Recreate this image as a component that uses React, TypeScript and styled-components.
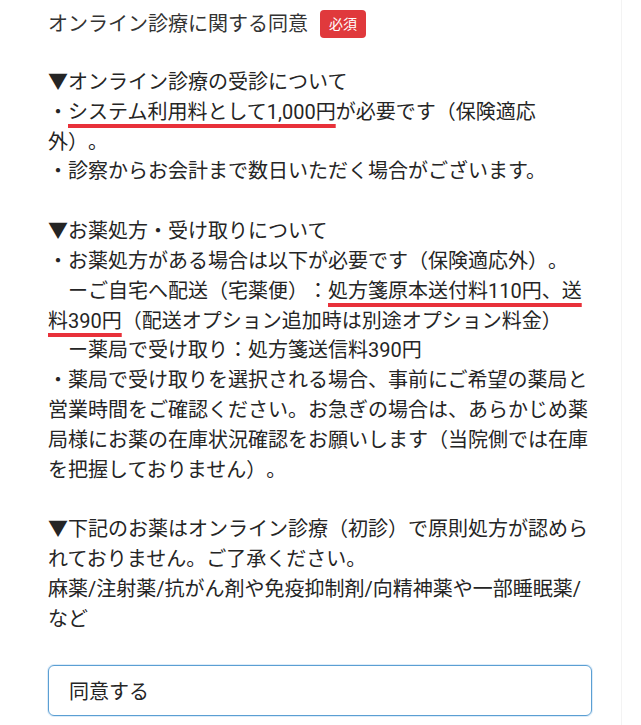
import React from 'react';
import styled, {createGlobalStyle} from "styled-components";

const GlobalStyle = createGlobalStyle`
  html, body {
    margin: 0;
    padding: 0;
    background: #ffffff;
  }
  body {
    font-family: Roboto, "Noto Sans CJK JP", sans-serif;
    text-spacing-trim: space-all;
    -webkit-font-smoothing: antialiased;
  }
`

const Page = styled.div`
  width: 622px;
  min-height: 725px;
  box-sizing: border-box;
  padding: 10px 0 0 48px;
  border-right: 1px solid #f3f3f3;
`

const Column = styled.div`
  width: 544px;
`

const Header = styled.div`
  display: flex;
  align-items: center;
  gap: 12px;
  height: 28px;
`

const Title = styled.h2`
  margin: 0;
  font-size: 20px;
  font-weight: 400;
  color: #333333;
  line-height: 28px;
`

const Badge = styled.span`
  display: inline-flex;
  align-items: center;
  justify-content: center;
  height: 28px;
  padding: 0 9px;
  border-radius: 4px;
  background: #e0393c;
  color: #ffffff;
  font-size: 14px;
  line-height: 1;
`

const Body = styled.div`
  margin-top: 30px;
  display: flex;
  flex-direction: column;
  gap: 30px;
  font-size: 20px;
  line-height: 29.8px;
  color: #252525;
`

const Section = styled.div`
  display: flex;
  flex-direction: column;
`

const Line = styled.div`
  line-break: strict;
`

// red hand-drawn style marker under the fees
const Marked = styled.span`
  text-decoration: underline;
  text-decoration-color: #e8313a;
  text-decoration-thickness: 4px;
  text-underline-offset: 5px;
  text-decoration-skip-ink: none;
`

const AgreeBox = styled.label`
  display: flex;
  align-items: center;
  height: 51px;
  box-sizing: border-box;
  margin-top: 30px;
  padding: 0 20px;
  border: 1.5px solid #5b9fd3;
  border-radius: 6px;
  box-shadow: 0 0 0 1px rgba(120, 180, 230, 0.25);
  font-size: 20px;
  color: #252525;
`

export default function App() {
    return (
        <>
            <GlobalStyle/>
            <Page>
                <Column>
                    <Header>
                        <Title>オンライン診療に関する同意</Title>
                        <Badge>必須</Badge>
                    </Header>
                    <Body>
                        <Section>
                            <Line>▼オンライン診療の受診について</Line>
                            <Line>・<Marked>システム利用料として1,000円</Marked>が必要です（保険適応外）。</Line>
                            <Line>・診察からお会計まで数日いただく場合がございます。</Line>
                        </Section>
                        <Section>
                            <Line>▼お薬処方・受け取りについて</Line>
                            <Line>・お薬処方がある場合は以下が必要です（保険適応外）。</Line>
                            <Line>　ーご自宅へ配送（宅薬便）：<Marked>処方箋原本送付料110円、送料390円</Marked>（配送オプション追加時は別途オプション料金）</Line>
                            <Line>　ー薬局で受け取り：処方箋送信料390円</Line>
                            <Line>・薬局で受け取りを選択される場合、事前にご希望の薬局と営業時間をご確認ください。お急ぎの場合は、あらかじめ薬局様にお薬の在庫状況確認をお願いします（当院側では在庫を把握しておりません）。</Line>
                        </Section>
                        <Section>
                            <Line>▼下記のお薬はオンライン診療（初診）で原則処方が認められておりません。ご了承ください。</Line>
                            <Line>麻薬/注射薬/抗がん剤や免疫抑制剤/向精神薬や一部睡眠薬/など</Line>
                        </Section>
                    </Body>
                    <AgreeBox>同意する</AgreeBox>
                </Column>
            </Page>
        </>
    );
}
